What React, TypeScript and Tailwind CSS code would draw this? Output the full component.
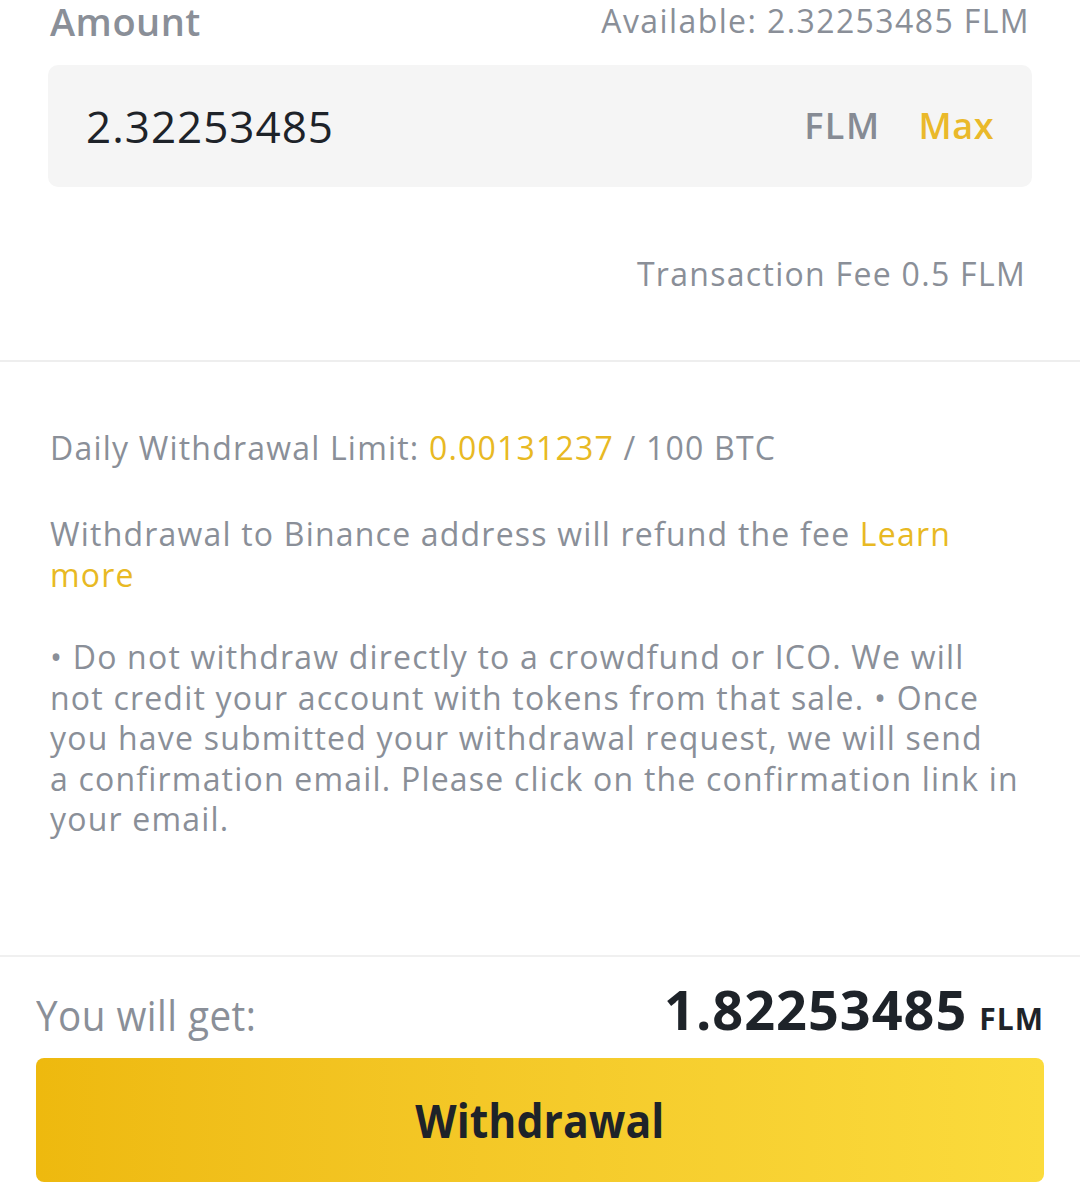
import React from 'react';

const font = { fontFamily: '"Open Sans", "Noto Sans", sans-serif' };

export default function App() {
  return (
    <div className="w-[1080px] h-[1200px] bg-white overflow-hidden" style={font}>
      {/* amount block */}
      <div className="px-[48px]">
        <div className="flex items-end justify-between h-[40px]">
          <span className="text-[38px] leading-none font-semibold text-[#8a8f98] pl-[2px] tracking-[0.5px]">Amount</span>
          <span className="mb-[3px] text-[32px] leading-none text-[#8a8f98] pr-[2px] tracking-[1.4px]">Available: 2.32253485 FLM</span>
        </div>
        <div className="mt-[25px] h-[122px] rounded-[10px] bg-[#f5f5f5] flex items-center px-[38px]">
          <span className="text-[44px] text-[#1e2329] tracking-[1px] flex-1">2.32253485</span>
          <span className="text-[36px] font-semibold text-[#868b94] tracking-[1.5px]">FLM</span>
          <span className="ml-[38px] text-[36px] font-semibold text-[#eab92a] tracking-[0.5px]">Max</span>
        </div>
        <div className="flex justify-end pt-[71px] pb-[70px] pr-[6px]">
          <span className="text-[32px] leading-none text-[#8a8f98] tracking-[1.3px]">Transaction Fee 0.5 FLM</span>
        </div>
      </div>
      <div className="h-[2px] bg-[#eeeeee]" />

      {/* notes */}
      <div className="px-[50px] pt-[65px] h-[593px] text-[32px] text-[#8a8f98] tracking-[1.2px]">
        <p className="leading-[41px]">
          Daily Withdrawal Limit: <span className="text-[#e8b923]">0.00131237</span> / 100 BTC
        </p>
        <p className="mt-[45px] leading-[41px]">
          Withdrawal to Binance address will refund the fee <span className="text-[#e8b923]">Learn<br />more</span>
        </p>
        <p className="mt-[42px] leading-[40.5px]">
          • Do not withdraw directly to a crowdfund or ICO. We will<br />
          not credit your account with tokens from that sale. • Once<br />
          you have submitted your withdrawal request, we will send<br />
          a confirmation email. Please click on the confirmation link in<br />
          your email.
        </p>
      </div>
      <div className="h-[2px] bg-[#f0f0f0]" />

      {/* bottom */}
      <div className="px-[36px]">
        <div className="flex items-end justify-between h-[101px] pb-[22px]">
          <span className="inline-block origin-left scale-x-[0.92] text-[42px] leading-none text-[#8a8f98] tracking-[0.5px]">You will get:</span>
          <span className="leading-none text-[#1e2329] font-bold whitespace-nowrap">
            <span className="text-[54px] tracking-[1px]">1.82253485</span>
            <span className="text-[30px] ml-[12px] tracking-[1px]">FLM</span>
          </span>
        </div>
        <button className="w-full h-[124px] rounded-[8px] bg-gradient-to-r from-[#eeb90e] to-[#fbdb3c] flex items-center justify-center">
          <span className="inline-block scale-x-[0.93] text-[46px] font-bold text-[#1e2329]">Withdrawal</span>
        </button>
      </div>
    </div>
  );
}
